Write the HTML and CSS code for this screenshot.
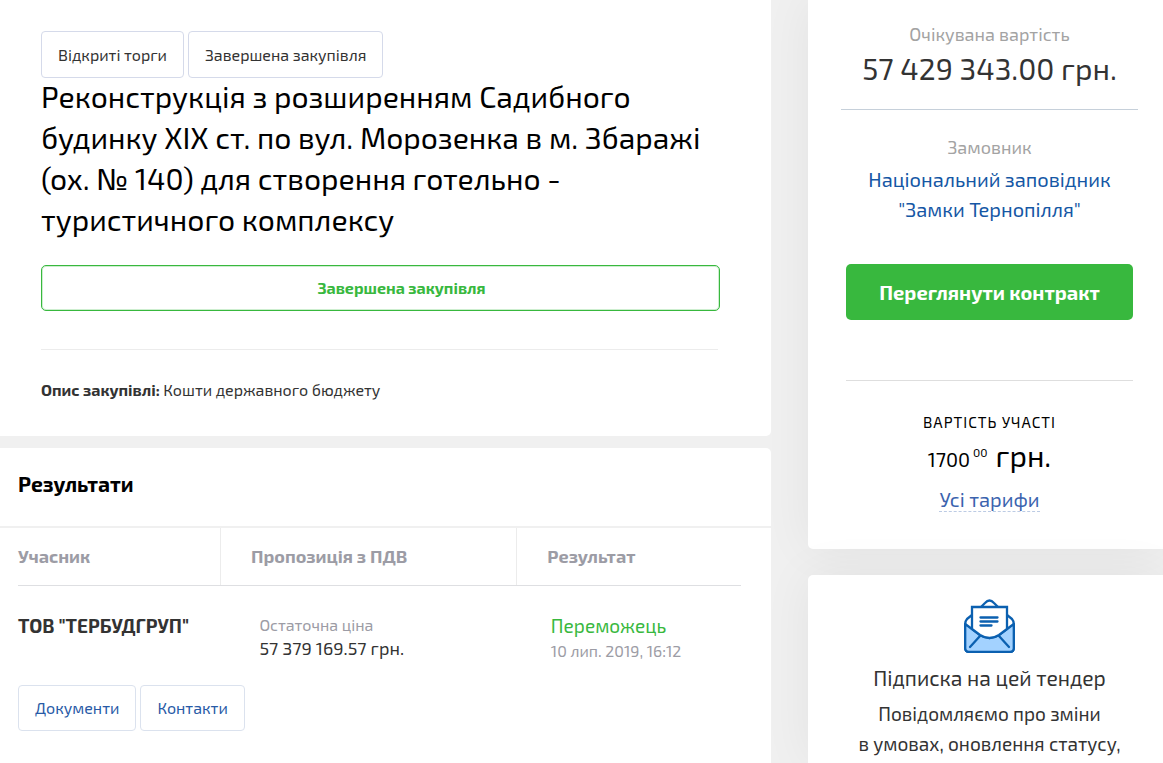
FILE: index.html
```html
<!DOCTYPE html>
<html lang="uk">
<head>
<meta charset="utf-8">
<meta name="viewport" content="width=device-width, initial-scale=1">
<title>Завершена закупівля</title>
<link rel="stylesheet" href="styles.css">
</head>
<body>
<div class="page">
  <main class="main">
    <section class="card tender">
      <div class="tags">
        <span class="tag">Відкриті торги</span>
        <span class="tag">Завершена закупівля</span>
      </div>
      <h1 class="title">Реконструкція з розширенням Садибного<br>будинку XIX ст. по вул. Морозенка в м. Збаражі<br>(ох. № 140) для створення готельно -<br>туристичного комплексу</h1>
      <button class="status" type="button">Завершена закупівля</button>
      <p class="description"><strong>Опис закупівлі:</strong> Кошти державного бюджету</p>
    </section>
    <section class="card results">
      <h2 class="results-title">Результати</h2>
      <div class="results-body">
        <table class="offers">
          <thead>
            <tr><th class="col-member">Учасник</th><th class="col-offer">Пропозиція з ПДВ</th><th class="col-result">Результат</th></tr>
          </thead>
          <tbody>
            <tr>
              <td class="member">ТОВ "ТЕРБУДГРУП"</td>
              <td class="offer"><div class="offer-label">Остаточна ціна</div><div class="offer-sum">57 379 169.57 грн.</div></td>
              <td class="result"><div class="winner">Переможець</div><div class="date">10 лип. 2019, 16:12</div></td>
            </tr>
          </tbody>
        </table>
        <div class="actions">
          <button class="action" type="button">Документи</button>
          <button class="action" type="button">Контакти</button>
        </div>
      </div>
    </section>
  </main>
  <aside class="side">
    <section class="card summary">
      <div class="budget">
        <div class="label">Очікувана вартість</div>
        <div class="value">57 429 343.00 грн.</div>
      </div>
      <div class="label">Замовник</div>
      <a class="customer" href="#">Національний заповідник<br>"Замки Тернопілля"</a>
      <button class="contract" type="button">Переглянути контракт</button>
      <div class="fee">
        <div class="fee-label">Вартість участі</div>
        <div class="price"><span class="amount">1700</span><span class="cents">00</span><span class="currency">грн.</span></div>
        <a class="rates" href="#">Усі тарифи</a>
      </div>
    </section>
    <section class="card subscribe">
      <svg class="mail" viewBox="0 0 51 54" width="51" height="54" fill="none" stroke="#0b60b0" stroke-width="2.3" stroke-linejoin="round" stroke-linecap="round" aria-hidden="true">
        <path d="M17 8 21 4Q25.500 -1 30 4L34 8"/>
        <path d="M8 16 3 20Q1.200 22 1.200 25V49Q1.200 52.800 5 52.800H46Q49.800 52.800 49.800 49V25Q49.800 22 48 20L43 16" fill="#fff"/>
        <path d="M1.200 25 16 36Q25.500 42 35 36L49.800 25V49Q49.800 52.800 46 52.800H5Q1.200 52.800 1.200 49Z" fill="#a3d2ff"/>
        <path d="M8 8H43V30L35 36Q25.500 42 16 36L8 30Z" fill="#fff" stroke-linejoin="miter"/>
        <path d="M16.500 18.500H33.500M16.500 22.500H33.500M16.500 26.500H27.500M16 37 6 48M35 37 45 48"/>
      </svg>
      <h2 class="subscribe-title">Підписка на цей тендер</h2>
      <p class="subscribe-text">Повідомляємо про зміни<br>в умовах, оновлення статусу,</p>
    </section>
  </aside>
</div>
</body>
</html>
```
FILE: styles.css
```css
* { box-sizing: border-box; }

body {
  margin: 0;
  background: #f0f0f0;
  color: #333;
  font-family: "Exo 2", Roboto, sans-serif;
  font-size: 16px;
}

h1, h2, p { margin: 0; }
a { text-decoration: none; }
button { font-family: inherit; cursor: pointer; }

.page {
  display: grid;
  grid-template-columns: minmax(0, 771fr) minmax(0, 355fr);
  gap: 37px;
  min-height: 100vh;
}

.main, .side { display: flex; flex-direction: column; }
.main { gap: 12px; }
.side { gap: 26px; }
.card { background: #fff; }

.tender {
  padding: 31px 51px 34px 41px;
  border-radius: 0 0 5px 0;
}
.tags { display: flex; gap: 4px; }
.tag {
  padding: 0 16px;
  border: 1px solid #d5daea;
  border-radius: 4px;
  line-height: 45px;
}
.title {
  margin-top: -2px;
  color: #000;
  font-size: 30px;
  font-weight: 400;
  line-height: 41px;
}
.status {
  display: block;
  width: 100%;
  height: 46px;
  margin-top: 25px;
  padding: 0 0 2px 42px;
  border: 1px solid #38b83e;
  border-radius: 5px;
  background: #fff;
  box-shadow: inset 0 0 0 1px #cdeecf;
  color: #38b83e;
  font-size: 16px;
  font-weight: 700;
}
.description {
  margin: 38px 2px 0 0;
  padding-top: 28px;
  border-top: 1px solid #ececec;
  line-height: 24px;
}

.results { flex: 1; border-radius: 0 5px 0 0; }
.results-title {
  padding: 21px 18px 27px;
  border-bottom: 2px solid #f0f0f0;
  color: #000;
  font-size: 21px;
  font-weight: 700;
  line-height: 30px;
}
.results-body { padding: 0 30px 32px 18px; }
.offers {
  width: 100%;
  table-layout: fixed;
  border-collapse: collapse;
}
.offers th {
  height: 57px;
  padding: 0 30px;
  border-bottom: 1px solid #dedfe2;
  border-left: 1px solid #ececec;
  color: #9c9ca5;
  font-size: 18px;
  font-weight: 700;
  text-align: left;
}
.offers .col-member { width: 28%; padding-left: 0; border-left: 0; }
.offers .col-offer { width: 41%; }
.offers td { padding: 28px 0 21px; vertical-align: top; }
.offers .member { font-size: 19px; font-weight: 700; line-height: 24px; }
.offers .offer { padding-left: 39px; }
.offers .result { padding-left: 34px; }
.offer-label, .date { color: #9c9ca5; font-size: 16px; }
.offer-label { line-height: 22px; }
.date { line-height: 26px; }
.offer-sum { font-size: 18px; line-height: 24px; }
.winner { color: #38b83e; font-size: 19px; line-height: 24px; }

.actions { display: flex; gap: 4px; }
.action {
  height: 46px;
  padding: 0 16px;
  border: 1px solid #dbe2ee;
  border-radius: 4px;
  background: #fff;
  color: #285aa6;
  font-size: 16px;
}

.side { text-align: center; }
.side .card { box-shadow: 0 0 50px rgba(0, 0, 0, 0.06); }
.summary {
  padding: 19px 30px 37px 38px;
  border-radius: 0 0 0 5px;
}
.budget {
  margin: 0 -5px 22px;
  padding-bottom: 21px;
  border-bottom: 1px solid #c6d0da;
}
.label { color: #a3a3a3; font-size: 18px; line-height: 30px; }
.value { font-size: 30px; line-height: 39px; }
.customer {
  display: block;
  margin-top: 2px;
  color: #1557a5;
  font-size: 20px;
  line-height: 30px;
}
.contract {
  display: block;
  width: 100%;
  height: 56px;
  margin-top: 40px;
  border: 0;
  border-radius: 5px;
  background: #38b83e;
  color: #fff;
  font-size: 20px;
  font-weight: 700;
}
.fee {
  margin-top: 60px;
  padding-top: 29px;
  border-top: 1px solid #dedede;
  color: #000;
}
.fee-label {
  font-size: 15px;
  line-height: 24px;
  letter-spacing: 1px;
  text-transform: uppercase;
}
.price {
  display: flex;
  justify-content: center;
  align-items: baseline;
  margin-top: 1px;
  line-height: 41px;
}
.amount { font-size: 20px; }
.cents { align-self: flex-start; margin: 0 8px 0 3px; font-size: 12px; line-height: 34px; }
.currency { font-size: 30px; }
.rates {
  display: inline-block;
  margin-top: 7px;
  border-bottom: 1px dashed #bccbe4;
  color: #3b63ae;
  font-size: 20px;
  line-height: 24px;
}

.subscribe {
  flex: 1;
  padding: 24px 30px 3px 38px;
  border-radius: 5px 0 0 0;
}
.mail { display: block; margin: 0 auto 10px; }
.subscribe-title { font-size: 21px; font-weight: 400; line-height: 30px; }
.subscribe-text { margin: 6px -5px 0; font-size: 19px; line-height: 30px; }
```
